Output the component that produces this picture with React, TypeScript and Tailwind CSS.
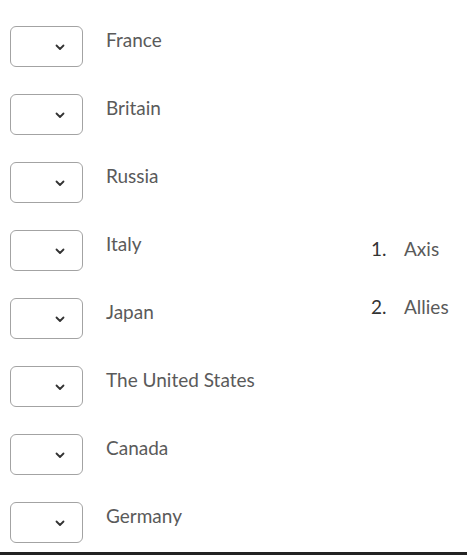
const countries = ['France', 'Britain', 'Russia', 'Italy', 'Japan', 'The United States', 'Canada', 'Germany'];
const options = ['Axis', 'Allies'];

function Chevron() {
  return (
    <svg width="10" height="7" viewBox="0 0 10 7" fill="none">
      <path d="M1.5 1.5 L5 5 L8.5 1.5" stroke="#333" strokeWidth="1.8" strokeLinecap="round" strokeLinejoin="round" />
    </svg>
  );
}

export default function App() {
  return (
    <div
      className="w-[467px] h-[555px] bg-white flex flex-col text-[#5a5a5a]"
      style={{ fontFamily: 'Lato, "Open Sans", sans-serif' }}
    >
      <div className="flex flex-1 pt-[26px]">
        <div className="w-[371px] flex flex-col gap-[27px] pl-[10px]">
          {countries.map((c) => (
            <div key={c} className="flex items-start">
              <div className="w-[73px] h-[41px] border border-[#a3a3a3] rounded-[6px] flex items-center justify-end pr-[17px] pt-[1px]">
                <Chevron />
              </div>
              <span className="ml-[23px] mt-[2px] text-[19px] leading-[24px]">{c}</span>
            </div>
          ))}
        </div>
        <div className="flex flex-col gap-[34px] pt-[211px]">
          {options.map((o, i) => (
            <div key={o} className="flex items-baseline text-[19px] leading-[24px]">
              <span className="w-[33px] text-[#333]">{i + 1}.</span>
              <span>{o}</span>
            </div>
          ))}
        </div>
      </div>
      <div className="h-[3px] bg-[#222]" />
    </div>
  );
}
